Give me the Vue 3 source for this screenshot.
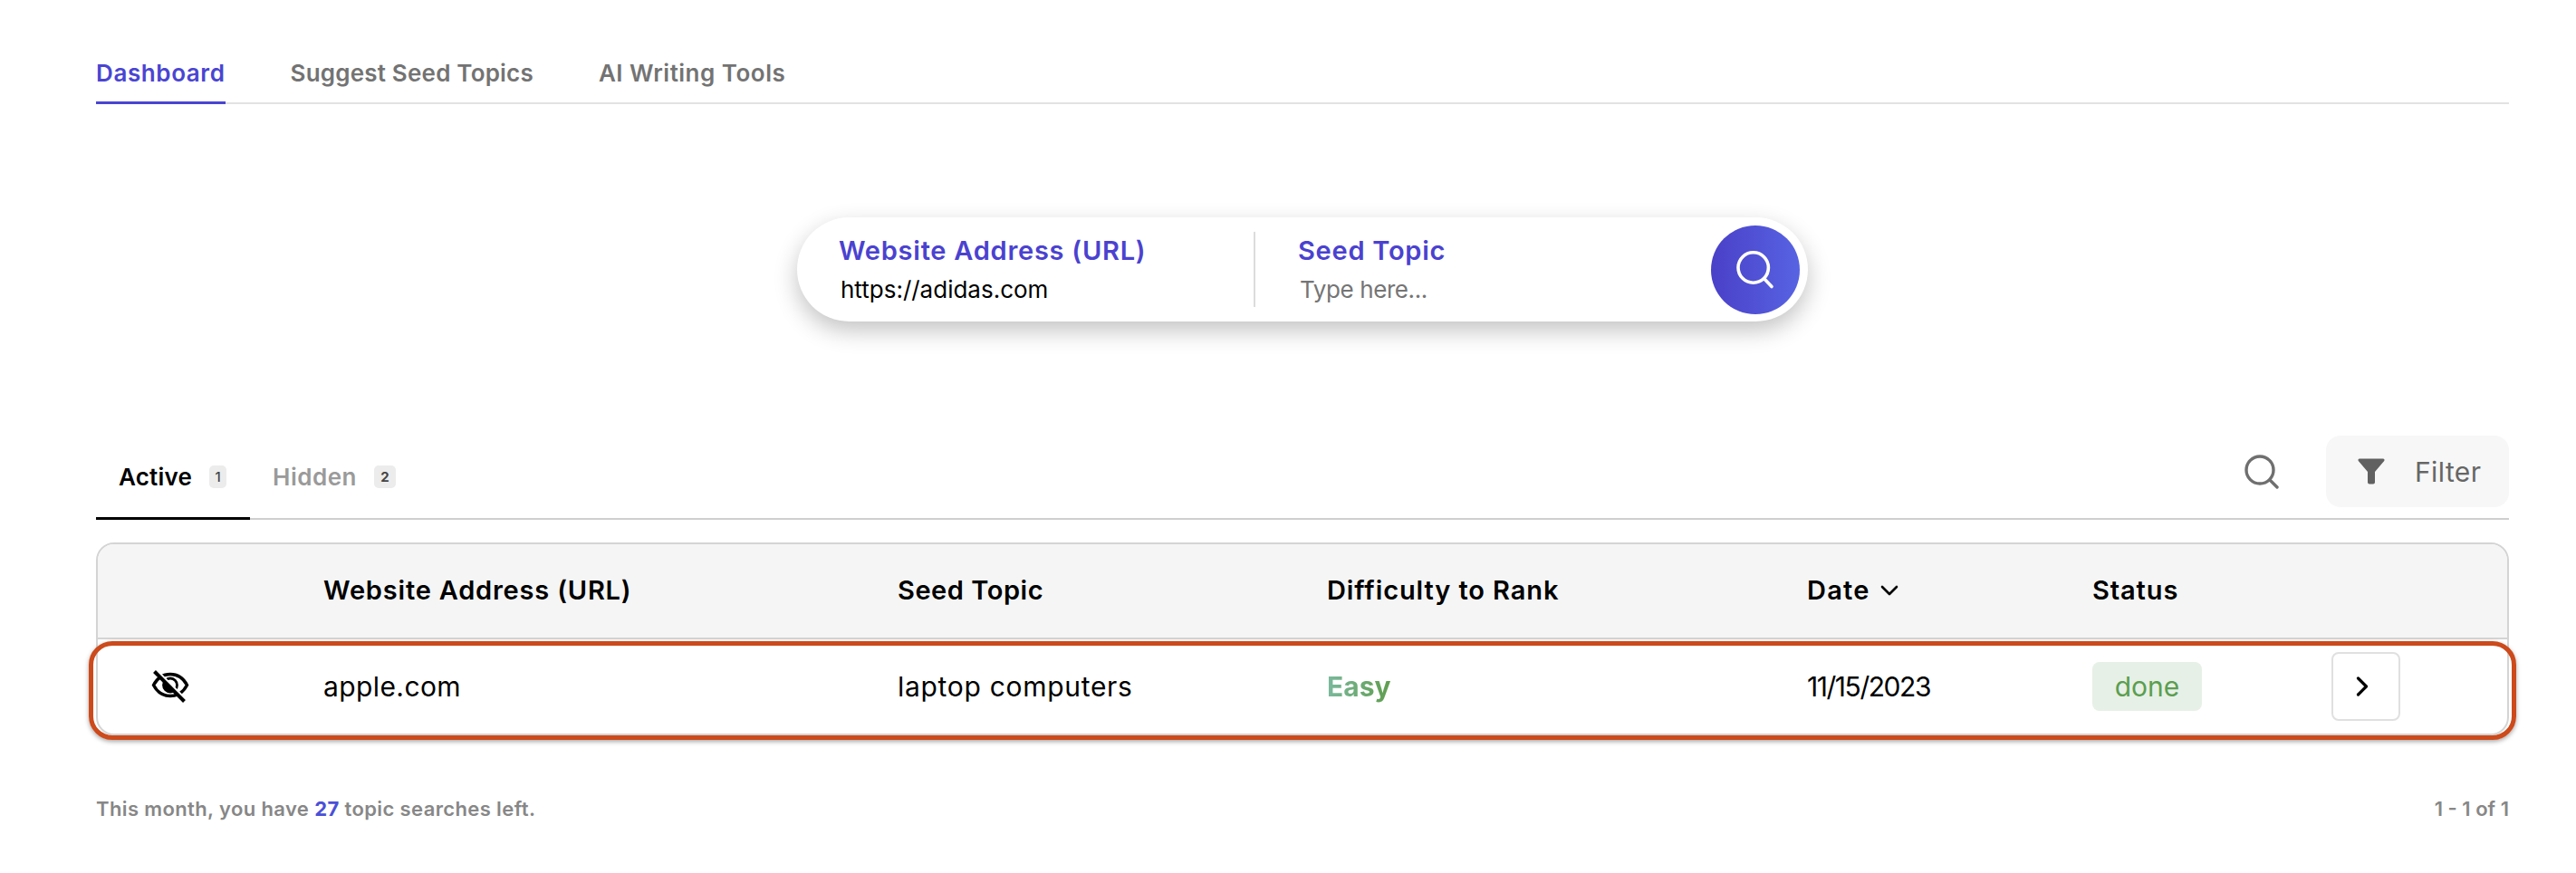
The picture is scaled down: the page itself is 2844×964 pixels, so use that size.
<script setup>
const navItems = [
  { label: 'Dashboard', active: true },
  { label: 'Suggest Seed Topics', active: false },
  { label: 'AI Writing Tools', active: false }
]
</script>

<template>
  <div class="page">
    <nav class="nav">
      <a v-for="item in navItems" :key="item.label" class="nav-item" :class="{ active: item.active }">{{ item.label }}</a>
    </nav>

    <section class="search-wrap">
      <div class="search">
        <div class="field field-url">
          <label>Website Address (URL)</label>
          <span class="value">https://adidas.com</span>
        </div>
        <div class="divider"></div>
        <div class="field field-topic">
          <label>Seed Topic</label>
          <span class="placeholder">Type here...</span>
        </div>
        <button class="go" aria-label="Search">
          <svg width="44" height="44" viewBox="0 0 44 44" fill="none" stroke="#fff" stroke-width="3.600" stroke-linecap="round">
            <circle cx="19.700" cy="19.500" r="16.700" />
            <path d="M32 32l8 8.500" />
          </svg>
        </button>
      </div>
    </section>

    <div class="tabs">
      <div class="tab active">Active <span class="count">1</span></div>
      <div class="tab hidden-tab">Hidden <span class="count count-hidden">2</span></div>
      <div class="tools">
        <svg class="find" width="38" height="38" viewBox="0 0 38 38" fill="none" stroke="#6f6f6f" stroke-width="3.400" stroke-linecap="round">
          <circle cx="17" cy="17" r="15" />
          <path d="M28 28l8 8" />
        </svg>
        <button class="filter">
          <svg width="30" height="30" viewBox="0 0 30 30" fill="#616161">
            <path d="M2 .5h26a1.500 1.500 0 0 1 1.200 2.400L19 15v11.500a2 2 0 0 1-2 2h-4a2 2 0 0 1-2-2V15L.8 2.900A1.500 1.500 0 0 1 2 .5z" />
          </svg>
          <span>Filter</span>
        </button>
      </div>
    </div>

    <div class="table">
      <div class="head grid">
        <div></div>
        <div class="h-url">Website Address (URL)</div>
        <div class="h-topic">Seed Topic</div>
        <div class="h-diff">Difficulty to Rank</div>
        <div class="date">Date
          <svg width="20" height="12" viewBox="0 0 20 12" fill="none" stroke="#000" stroke-width="2.600" stroke-linecap="round" stroke-linejoin="round">
            <path d="M2 2l8 8 8-8" />
          </svg>
        </div>
        <div class="h-status">Status</div>
        <div></div>
      </div>
      <div class="row grid">
        <div class="eye-cell">
          <svg width="42" height="36" viewBox="0 0 42 36" fill="none" stroke="#000" stroke-width="3.400">
            <path d="M2.500 16.500C7 8 13 4.500 21 4.500S35 8 39.500 16.500C35 25 29 28.500 21 28.500S7 25 2.500 16.500z" />
            <circle cx="21" cy="16.500" r="7.500" stroke-width="2.800" />
            <path d="M14.500 12.500L24 23.500a7.500 7.500 0 0 1-9.500-11z" fill="#000" stroke="none" />
            <path d="M7 1.500l33 33" stroke="#fff" stroke-width="3" />
            <path d="M3.500 1.500l33 33" stroke-width="4" />
          </svg>
        </div>
        <div class="c-url">apple.com</div>
        <div class="c-topic">laptop computers</div>
        <div class="easy">Easy</div>
        <div class="c-date">11/15/2023</div>
        <div><span class="done">done</span></div>
        <div>
          <button class="open" aria-label="Open">
            <svg width="14" height="22" viewBox="0 0 14 22" fill="none" stroke="#000" stroke-width="3.200" stroke-linecap="round" stroke-linejoin="round">
              <path d="M2.500 2l9 9-9 9" />
            </svg>
          </button>
        </div>
      </div>
      <div class="highlight"></div>
    </div>

    <footer class="foot">
      <span class="left">This month, you have <b>27</b> topic searches left.</span>
      <span>1 - 1 of 1</span>
    </footer>
  </div>
</template>

<style>
html, body { margin: 0; background: #fff; }
</style>

<style scoped>
.page {
  width: 2844px;
  height: 964px;
  box-sizing: border-box;
  padding: 0 74px 0 106px;
  font-family: Inter, "Liberation Sans", sans-serif;
  color: #000;
  overflow: hidden;
}
.nav {
  display: flex;
  gap: 72px;
  height: 115px;
  box-sizing: border-box;
  border-bottom: 2px solid #e2e2e2;
}
.nav-item {
  height: 115px;
  box-sizing: border-box;
  padding-top: 64px;
  font-size: 26px;
  line-height: 34px;
  font-weight: 600;
  color: #737373;
  letter-spacing: 0.2px;
}
.nav-item:nth-child(1) { letter-spacing: 0.6px; }
.nav-item:nth-child(3) { letter-spacing: 0.5px; }
.nav-item.active {
  color: #4a45d2;
  border-bottom: 3px solid #4a45d2;
}
.search-wrap {
  display: flex;
  justify-content: center;
  padding-top: 125px;
}
.search {
  width: 1116px;
  height: 115px;
  box-sizing: border-box;
  background: #fff;
  border-radius: 58px;
  box-shadow: 0 10px 26px rgba(0, 0, 0, 0.24);
  display: flex;
  align-items: center;
  padding: 0 9px 0 46px;
}
.field {
  display: flex;
  flex-direction: column;
  gap: 8px;
}
.field label {
  font-size: 29px;
  line-height: 36px;
  font-weight: 600;
  color: #4a42d0;
  letter-spacing: 0.75px;
}
.field-url { width: 458px; }
.field-topic { flex: 1; padding-left: 47px; }
.value {
  font-size: 26px;
  line-height: 34px;
  padding-left: 2px;
}
.placeholder {
  font-size: 26px;
  line-height: 34px;
  color: #757575;
  padding-left: 2px;
  letter-spacing: -0.4px;
}
.divider {
  width: 2px;
  height: 83px;
  background: #dcdcdc;
}
.go {
  width: 98px;
  height: 98px;
  border: 0;
  padding: 0;
  border-radius: 50%;
  background: linear-gradient(90deg, #4a40c8, #5763e2);
  display: flex;
  align-items: center;
  justify-content: center;
}
.tabs {
  margin-top: 126px;
  height: 93px;
  box-sizing: border-box;
  border-bottom: 2px solid #cfcfcf;
  display: flex;
  align-items: flex-start;
}
.tab {
  height: 93px;
  box-sizing: border-box;
  padding: 29px 26px 0 25px;
  font-size: 26px;
  line-height: 34px;
  font-weight: 600;
  color: #9a9a9a;
  display: flex;
  gap: 19px;
  align-items: flex-start;
}
.hidden-tab { letter-spacing: 0.5px; }
.tab.active {
  width: 170px;
  color: #000;
  letter-spacing: 0.2px;
  border-bottom: 3px solid #000;
}
.count {
  min-width: 19px;
  height: 25px;
  margin-top: 4px;
  padding: 0 2px;
  box-sizing: border-box;
  border-radius: 5px;
  background: #ececec;
  color: #444;
  font-size: 15px;
  line-height: 25px;
  text-align: center;
  font-weight: 500;
  letter-spacing: 0;
}
.count-hidden { min-width: 24px; font-weight: 700; }
.tools {
  margin-left: auto;
  display: flex;
  align-items: center;
  gap: 52px;
  height: 79px;
}
.filter {
  width: 202px;
  height: 79px;
  border: 0;
  border-radius: 16px;
  background: #f7f7f7;
  display: flex;
  align-items: center;
  gap: 33px;
  padding: 0 0 0 35px;
  font-family: inherit;
  font-size: 30px;
  letter-spacing: 0.4px;
  color: #666;
}
.table {
  position: relative;
  margin-top: 25px;
  box-sizing: border-box;
  border: 2px solid #d4d4d4;
  border-radius: 20px;
}
.grid {
  display: grid;
  grid-template-columns: 249px 634px 474px 530px 315px 264px 1fr;
  align-items: center;
}
.head {
  height: 105px;
  box-sizing: border-box;
  padding-bottom: 2px;
  background: #f5f5f5;
  border-bottom: 2px solid #d4d4d4;
  border-radius: 18px 18px 0 0;
  font-size: 29px;
  font-weight: 600;
  letter-spacing: 0.8px;
}
.h-topic { letter-spacing: 0.55px; }
.h-diff { letter-spacing: 0.9px; }
.h-status { letter-spacing: 0.9px; }
.date {
  display: flex;
  align-items: center;
  gap: 11px;
  letter-spacing: 1.2px;
}
.row {
  height: 104px;
  font-size: 30px;
}
.c-url { letter-spacing: 0.4px; }
.c-topic { letter-spacing: 0.7px; }
.c-date { letter-spacing: -1.45px; }
.eye-cell {
  padding-left: 59px;
  display: flex;
}
.easy {
  font-weight: 700;
  background: linear-gradient(90deg, #7ab99c, #5f9d4d);
  -webkit-background-clip: text;
  background-clip: text;
  color: transparent;
  width: fit-content;
}
.done {
  display: inline-block;
  width: 121px;
  height: 54px;
  border-radius: 8px;
  background: #e7f0e6;
  color: #5a9e50;
  line-height: 54px;
  text-align: center;
  vertical-align: middle;
}
.open {
  width: 76px;
  height: 76px;
  padding: 0 8px 0 0;
  background: #fff;
  border: 2px solid #e0e0e0;
  border-radius: 8px;
  display: flex;
  align-items: center;
  justify-content: center;
}
.highlight {
  position: absolute;
  left: -10px;
  right: -10px;
  top: 107px;
  height: 109px;
  box-sizing: border-box;
  border: 5px solid #cc4a1b;
  border-radius: 26px;
  box-shadow: 0 2px 5px rgba(0, 0, 0, 0.35);
  pointer-events: none;
}
.foot {
  margin-top: 66px;
  display: flex;
  justify-content: space-between;
  font-size: 22px;
  line-height: 30px;
  font-weight: 600;
  color: #878787;
}
.foot .left { letter-spacing: 0.38px; }
.foot b {
  color: #4a50d8;
  font-weight: 700;
}
</style>
